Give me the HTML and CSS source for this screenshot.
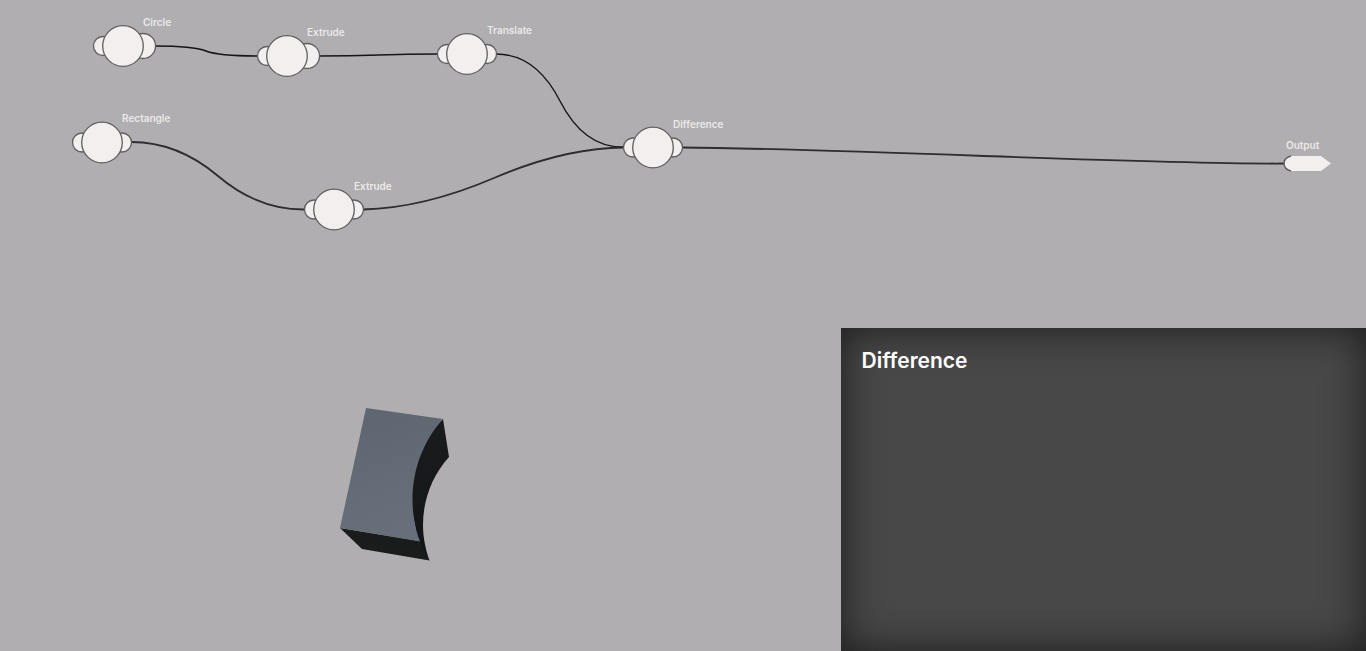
FILE: index.html
```html
<!DOCTYPE html>
<html lang="en">
<head>
<meta charset="utf-8">
<meta name="viewport" content="width=device-width, initial-scale=1">
<title>Node Editor</title>
<link rel="stylesheet" href="styles.css">
</head>
<body>
<main class="workspace">
  <svg class="scene" role="img" aria-label="Modelling graph and rendered solid">
    <defs>
      <linearGradient id="face" x1="0" y1="0" x2="0.3" y2="1">
        <stop offset="0" stop-color="#5d666f"/>
        <stop offset="1" stop-color="#676f7b"/>
      </linearGradient>
      <linearGradient id="hollow" x1="0" y1="0" x2="0" y2="1">
        <stop offset="0" stop-color="#191b1b"/>
        <stop offset="0.6" stop-color="#16181a"/>
        <stop offset="1" stop-color="#101113"/>
      </linearGradient>
      <g id="node">
        <circle class="shape" cx="-20" r="9.5"/>
        <circle class="shape" cx="20" r="9.5"/>
        <circle class="shape" r="20.3"/>
      </g>
      <g id="source-node">
        <circle class="shape" cx="-20" r="9.5"/>
        <circle class="shape" cx="20" r="12.5"/>
        <circle class="shape" r="20.3"/>
      </g>
    </defs>

    <g class="solid">
      <path fill="url(#hollow)" d="M443 419L449 457C432 476 423 500 423 525C423 538 426 551 429.500 560.500L418 541L410 500C410 470 422 440 443 419Z"/>
      <path fill="#1a1c1c" d="M340 528L420 541L429.500 560.500L362 549Z"/>
      <path fill="url(#face)" d="M366 408L443 419C423 441 412.500 470 412.500 500C412.500 515 415.500 530 420 541.500L340 528Z"/>
    </g>

    <g class="wires">
      <path class="wire" d="M155 46Q193 46 206 51T258 56"/>
      <path class="wire" d="M319 56Q350 56 379 55T438 54"/>
      <path class="wire fine" d="M496 54Q536 54 560 101T624 147"/>
      <path class="wire soft" d="M131 142Q178 142 218 176T305 209.500"/>
      <path class="wire soft" d="M363 209.500Q424 208 494 178T624 147.500"/>
      <path class="wire soft" d="M682 147.500Q760 148 984 156T1285 163.500"/>
    </g>

    <g>
      <use href="#source-node" x="123" y="46"/><text class="label" x="143" y="26">Circle</text>
      <use href="#source-node" x="287" y="56"/><text class="label" x="307" y="36">Extrude</text>
      <use href="#node" x="467" y="54"/><text class="label" x="487" y="34">Translate</text>
      <use href="#node" x="102" y="142.500"/><text class="label" x="122" y="122">Rectangle</text>
      <use href="#node" x="334" y="209.500"/><text class="label" x="354" y="190">Extrude</text>
      <use href="#node" x="653" y="147.500"/><text class="label" x="673" y="128">Difference</text>
      <path class="body" d="M1291 156H1321L1331 163.500L1321 171H1291Q1284 169 1284 163.500Q1284 158 1291 156Z"/>
      <path class="port" d="M1291 156Q1284 158 1284 163.500Q1284 169 1291 171"/>
      <text class="label" x="1286" y="149">Output</text>
    </g>
  </svg>

  <aside class="panel">
    <h1 class="title">Difference</h1>
  </aside>
</main>
</body>
</html>
```
FILE: styles.css
```css
* { box-sizing: border-box; }

body {
  margin: 0;
  background: #b0aeb0;
  font-family: Inter, "Open Sans", sans-serif;
}

.workspace {
  display: grid;
  grid-template-columns: 8fr 5fr;
  grid-template-rows: 50.4% 1fr;
  height: 100vh;
  overflow: hidden;
}

.scene {
  grid-area: 1 / 1 / 3 / 3;
  width: 100%;
  height: 100%;
}

.shape {
  fill: #f2efee;
  stroke: #5f5e60;
  stroke-width: 1.3;
}

.body { fill: #f2efee; }

.port {
  fill: none;
  stroke: #5f5e60;
  stroke-width: 1.5;
}

.wire {
  fill: none;
  stroke: #151517;
  stroke-width: 1.6;
}

.wire.fine { stroke-width: 1.4; }

.wire.soft {
  stroke: #2d2c2f;
  stroke-width: 1.8;
}

.label {
  fill: #ebe9e9;
  font-size: 10px;
  font-weight: 600;
}

.panel {
  grid-area: 2 / 2;
  padding: 21px;
  background: #484848;
  box-shadow: inset 0 0 40px #1c1c1c;
}

.title {
  margin: 0;
  color: #fff;
  font-size: 21px;
  font-weight: 600;
  line-height: 24px;
}
```
